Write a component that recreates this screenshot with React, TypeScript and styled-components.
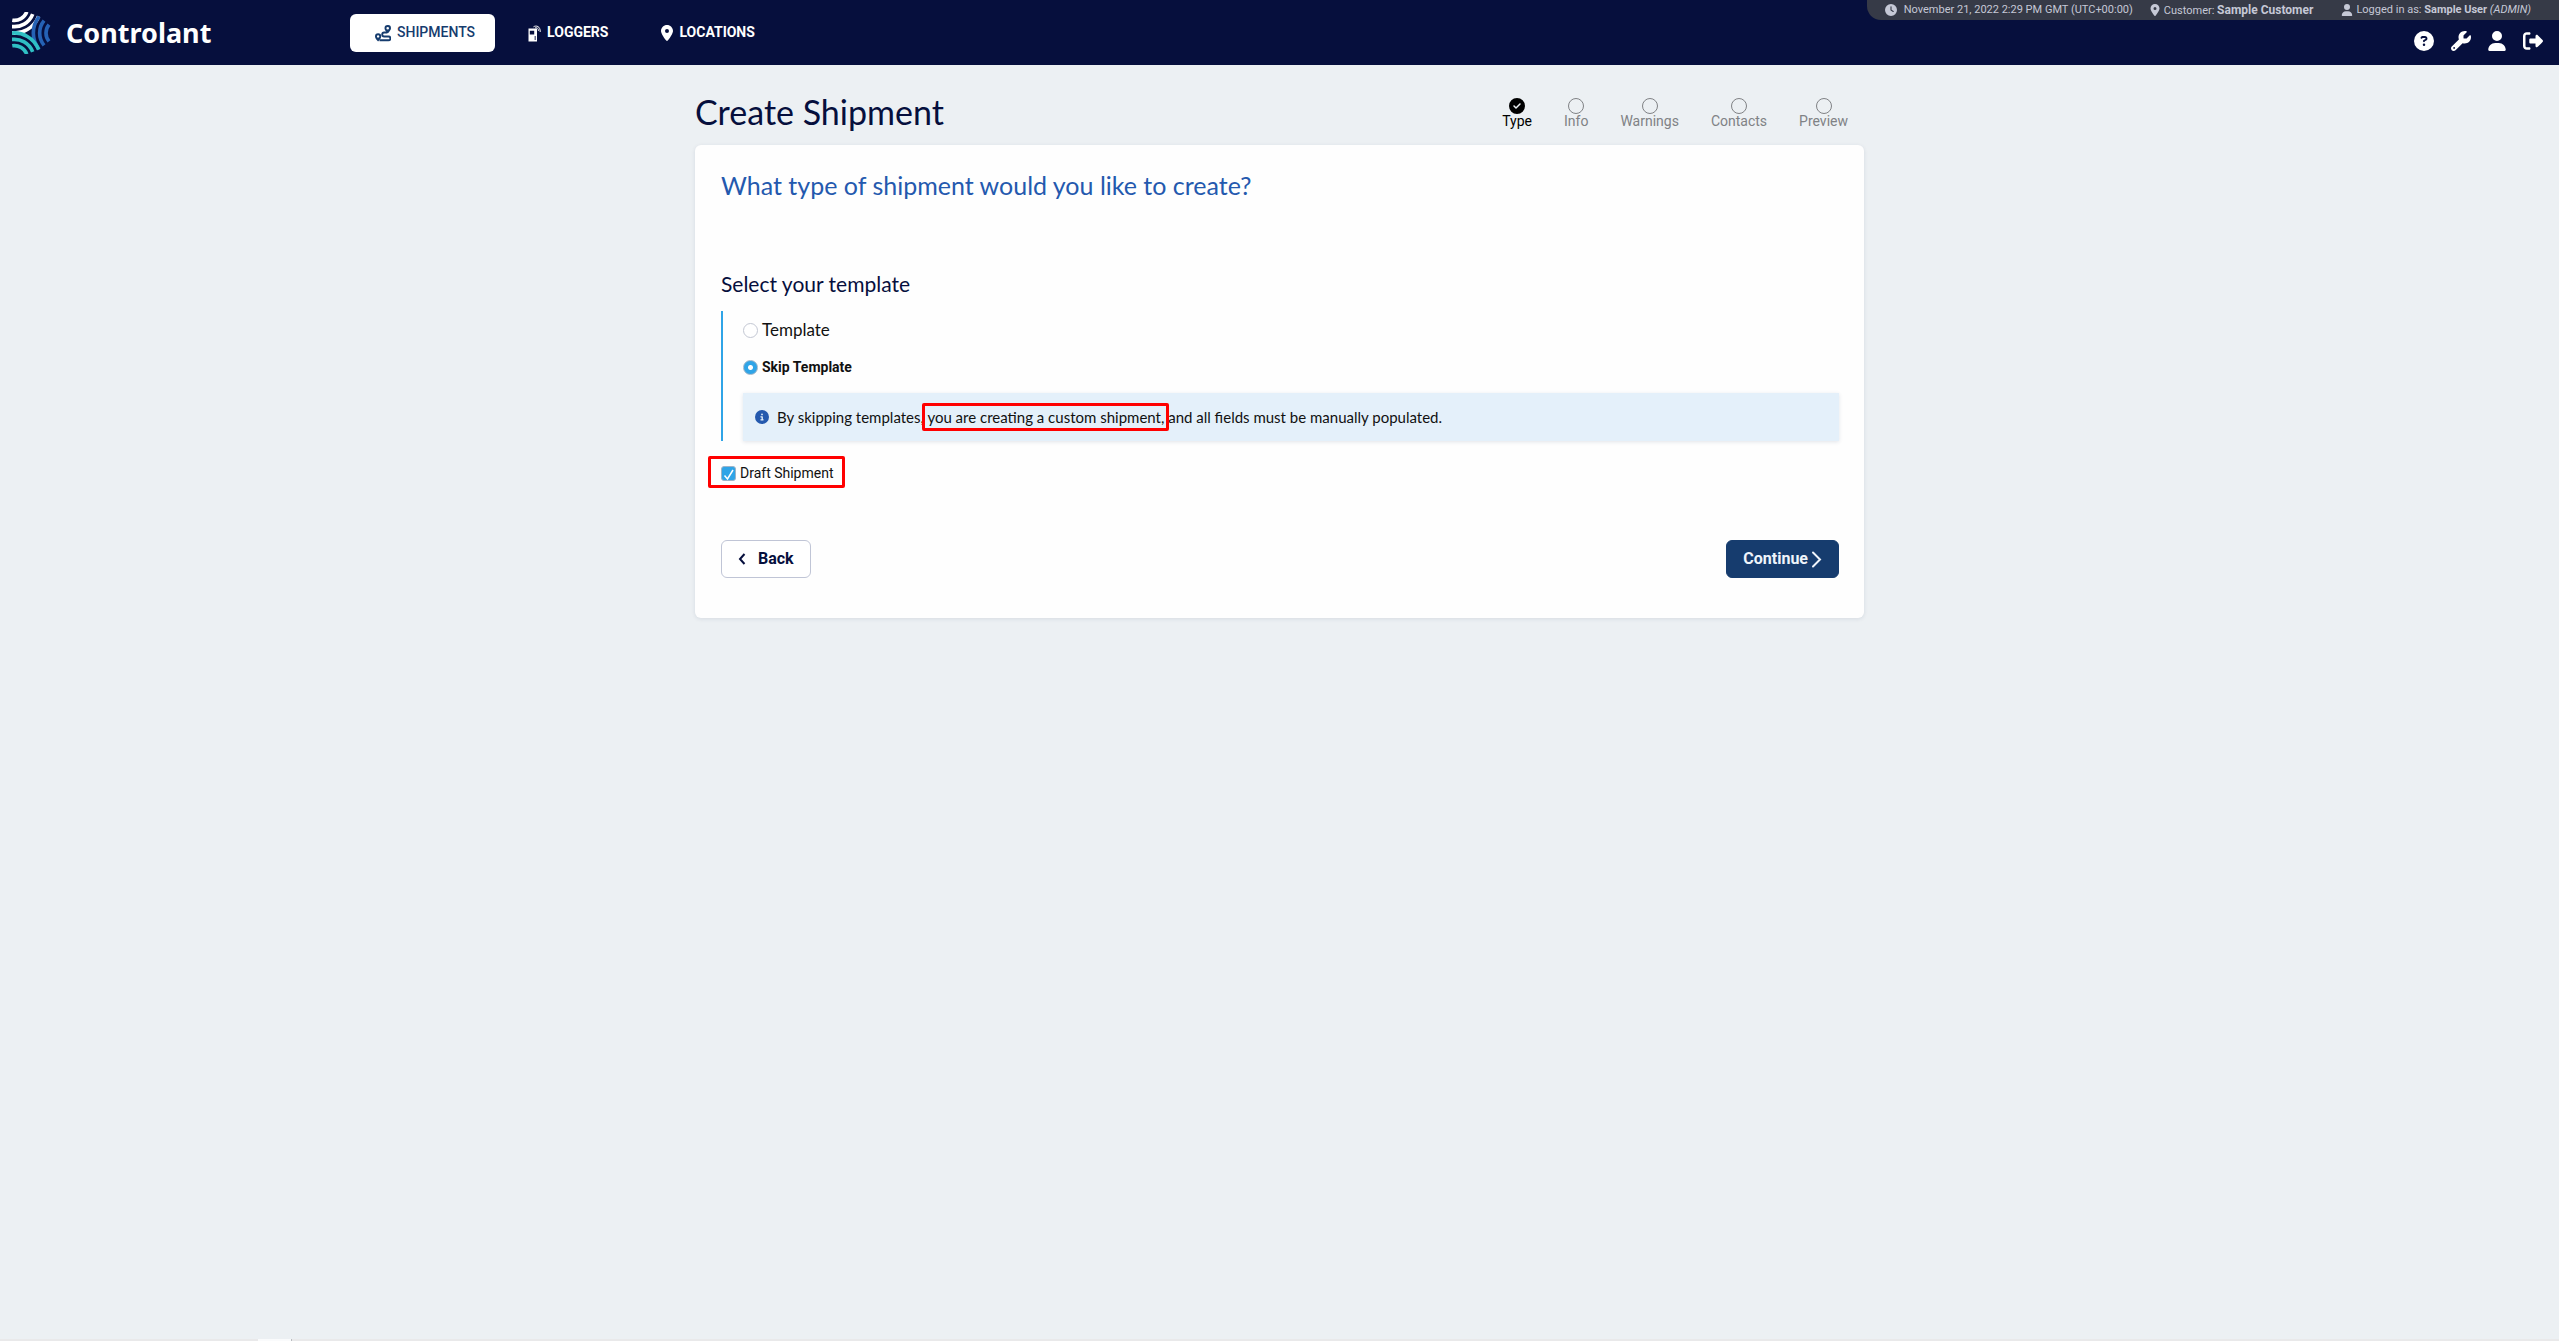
import React, { useState } from "react";
import styled, { createGlobalStyle, css } from "styled-components";
import {
  FaClock,
  FaLocationDot,
  FaUser,
  FaCircleQuestion,
  FaWrench,
  FaCircleInfo,
  FaRightFromBracket,
  FaCircleCheck,
} from "react-icons/fa6";

const humanist = `Lato, "Open Sans", sans-serif`;
const roboto = `Roboto, "Liberation Sans", sans-serif`;

const GlobalStyle = createGlobalStyle`
  *, *::before, *::after { box-sizing: border-box; }
  body {
    margin: 0;
    background: #ecf0f3;
    font-family: ${roboto};
    font-size: 14px;
    color: #111;
  }
`;

const Page = styled.div`
  min-height: 100vh;
  display: flex;
  flex-direction: column;
`;

const Header = styled.header`
  display: flex;
  height: 65px;
  background: #060f3d;
  color: #fff;
`;

const Brand = styled.a`
  display: flex;
  align-items: center;
  gap: 14px;
  width: 350px;
  padding-left: 12px;
  color: #fff;
  text-decoration: none;
  font: 700 27px/36px "Noto Sans", sans-serif;
`;

const Nav = styled.nav`
  display: flex;
  align-items: center;
  gap: 8px;
`;

const NavLink = styled.a<{ $active?: boolean }>`
  display: flex;
  align-items: center;
  gap: 6px;
  height: 38px;
  padding: 0 20px 2px 25px;
  border-radius: 6px;
  font-weight: 700;
  line-height: 36px;
  text-decoration: none;
  color: #fff;
  svg {
    margin-top: 3px;
  }
  ${(p) =>
    p.$active &&
    css`
      background: #fff;
      color: #163c6e;
      font-weight: 500;
    `}
`;

const PinIcon = styled(FaLocationDot)`
  width: 12px;
  height: 16px;
`;

const HeaderEnd = styled.div`
  display: flex;
  flex-direction: column;
  align-items: flex-end;
  margin-left: auto;
`;

const StatusBar = styled.div`
  display: flex;
  align-items: center;
  height: 20px;
  padding: 0 28px 0 18px;
  border-bottom-left-radius: 14px;
  background: #363a47;
  color: #c5c8d6;
  font-size: 11px;
  line-height: 20px;
`;

const StatusItem = styled.span<{ $gap: number; $after?: number }>`
  display: flex;
  align-items: center;
  gap: ${(p) => p.$gap}px;
  margin-right: ${(p) => p.$after ?? 0}px;
  white-space: pre;
`;

const CustomerName = styled.b`
  font-size: 12px;
`;

const Tools = styled.div`
  display: flex;
  align-items: center;
  gap: 17px;
  padding: 11px 16px 0 0;
`;

const ToolButton = styled.button`
  display: flex;
  padding: 0;
  border: 0;
  background: none;
  color: #fff;
  cursor: pointer;
`;

const AccountIcon = styled(FaUser)`
  width: 18px;
  height: 20px;
`;

const Main = styled.main`
  flex: 1;
  width: 100%;
  max-width: 1169px;
  margin: 0 auto;
`;

const TitleRow = styled.div`
  display: flex;
  align-items: center;
  justify-content: space-between;
  height: 80px;
  padding-right: 16px;
`;

const Title = styled.h1`
  margin: 0;
  padding-top: 13px;
  font: 400 34px/40px ${humanist};
  color: #060f3d;
`;

const Steps = styled.ol`
  display: flex;
  gap: 32px;
  margin: 0;
  padding: 16px 0 0;
  list-style: none;
`;

const Step = styled.li<{ $current?: boolean }>`
  display: flex;
  flex-direction: column;
  align-items: center;
  line-height: 15px;
  color: ${(p) => (p.$current ? "#000" : "#808285")};
`;

const Ring = styled.span`
  width: 16px;
  height: 16px;
  border: 1px solid #808285;
  border-radius: 50%;
`;

const Card = styled.form`
  display: flex;
  flex-direction: column;
  padding: 24px 25px 40px 26px;
  border-radius: 6px;
  background: #fefefe;
  box-shadow: 0 1px 4px rgba(20, 40, 80, 0.1);
`;

const Question = styled.h2`
  margin: 0;
  font: 400 25px/32px ${humanist};
  color: #2459ae;
`;

const Group = styled.fieldset`
  margin: 0;
  padding: 0;
  border: 0;
`;

const GroupTitle = styled.legend`
  padding: 70px 0 14px;
  font: 400 21px/26px ${humanist};
  color: #060f3d;
`;

const Options = styled.div`
  display: flex;
  flex-direction: column;
  border-left: 2px solid #2fa4e7;
  padding: 8px 0 0 20px;
`;

const Option = styled.label`
  display: flex;
  align-items: center;
  gap: 4px;
  height: 22px;
  margin-bottom: 15px;
  font: 400 17px/22px ${humanist};
`;

const BoldOption = styled(Option)`
  font: 700 14px/22px ${roboto};
`;

const Radio = styled.input`
  appearance: none;
  width: 15px;
  height: 15px;
  margin: 0;
  border: 1px solid #c3c7d3;
  border-radius: 50%;
  background: #fff;
  &:checked {
    background: radial-gradient(circle, #fff 2px, #2fa4e7 3px);
    border-color: #9db4c8;
  }
`;

const Notice = styled.p`
  display: flex;
  align-items: center;
  gap: 8px;
  height: 48px;
  margin: 0;
  padding: 0 12px;
  background: #e4f0fa;
  box-shadow: 0 1px 4px rgba(20, 40, 80, 0.12);
  font: 400 15px/20px ${humanist};
`;

const marker = css`
  position: relative;
  &::after {
    content: "";
    position: absolute;
    border: 3px solid #f00;
    border-radius: 2px;
    pointer-events: none;
  }
`;

const MarkedText = styled.span`
  ${marker}
  &::after {
    inset: -5px -5px;
  }
`;

const DraftRow = styled.label`
  ${marker}
  display: flex;
  align-items: center;
  align-self: flex-start;
  gap: 4px;
  margin-top: 22px;
  line-height: 20px;
  &::after {
    inset: -7px -11px -5px -13px;
  }
`;

const CheckBox = styled.span`
  display: grid;
  width: 15px;
  height: 15px;
  > * {
    grid-area: 1 / 1;
  }
`;

const Check = styled.input`
  appearance: none;
  width: 15px;
  height: 15px;
  margin: 0;
  border: 1px solid #c3c7d3;
  border-radius: 3px;
  &:checked {
    background: #2fa4e7;
    border-color: #9db4c8;
  }
  &:not(:checked) + svg {
    visibility: hidden;
  }
`;

const CheckMark = styled.svg`
  pointer-events: none;
`;

const Actions = styled.div`
  display: flex;
  justify-content: space-between;
  margin-top: 57px;
`;

const Button = styled.button<{ $primary?: boolean }>`
  display: flex;
  align-items: center;
  height: 38px;
  padding: 0 16px;
  border: 1px solid #c0c5d6;
  border-radius: 6px;
  background: #fff;
  color: #060f3d;
  font: 700 16px/20px ${roboto};
  gap: 12px;
  ${(p) =>
    p.$primary &&
    css`
      gap: 3px;
      border-color: #163c6e;
      background: #163c6e;
      color: #eef4fb;
    `}
`;

const BottomStrip = styled.footer`
  display: flex;
  height: 2px;
  padding-left: 258px;
  background: #e9e9ea;
`;

const StripTab = styled.span`
  width: 34px;
  border-right: 1px solid #b9bcc0;
  background: #fafbfc;
`;

const Arcs = ({ color, turn }: { color: string; turn: number }) => (
  <g stroke={color} transform={`rotate(${turn} 88 99)`}>
    {[40, 59, 78].map((r) => {
      const a = (39 * Math.PI) / 180;
      const x = 178 - r * Math.cos(a);
      const dy = r * Math.sin(a);
      return <path key={r} d={`M${x} ${99 - dy}A${r} ${r} 0 0 0 ${x} ${99 + dy}`} />;
    })}
  </g>
);

const Logo = () => (
  <svg width="40" height="42" viewBox="36 36 120 126" fill="none" strokeWidth="11" aria-hidden>
    <Arcs color="#ffffff" turn={240} />
    <Arcs color="#2562b5" turn={0} />
    <Arcs color="#2fbfc4" turn={120} />
  </svg>
);

const ShipmentIcon = () => (
  <svg width="16" height="17" viewBox="0 0 16 17" fill="none" stroke="currentColor" aria-hidden>
    <path d="M12 7.500H9.200a2 2 0 0 0 0 4h4.300a1.900 1.900 0 0 1 0 3.800H4.500" strokeWidth="1.900" />
    <path
      fill="currentColor"
      stroke="none"
      fillRule="evenodd"
      d="M12.7 0A3.2 3.2 0 0 0 9.500 3.200C9.500 5 11 6.600 12.700 8.500C14.400 6.600 16 5 16 3.200A3.200 3.200 0 0 0 12.700 0ZM12.700 2A1.300 1.300 0 1 1 12.700 4.600A1.300 1.300 0 1 1 12.700 2ZM3.100 8.300A3.100 3.100 0 0 0 0 11.400C0 13 1.500 14.500 3.100 16.500C4.700 14.500 6.200 13 6.200 11.400A3.100 3.100 0 0 0 3.100 8.300ZM3.100 10.200A1.200 1.200 0 1 1 3.100 12.600A1.200 1.200 0 1 1 3.100 10.200Z"
    />
  </svg>
);

const LoggerIcon = () => (
  <svg width="13" height="17" viewBox="0 0 13 17" aria-hidden>
    <path fill="currentColor" fillRule="evenodd" d="M.5 3.500H9V16.500H.5ZM1.800 5.800V9.600H6.200V5.800ZM6.700 11V15H7.600V11Z" />
    <path fill="none" stroke="currentColor" d="M5.500 1.800C8 .2 12.500 1 12.200 7M7 3C9.500 2 10.600 4 10.400 6" />
  </svg>
);

const Chevron = ({ left }: { left?: boolean }) =>
  left ? (
    <svg width="8" height="12" viewBox="0 0 8 12" fill="none" stroke="currentColor" strokeWidth="2" aria-hidden>
      <path d="M6.500 1L2 6l4.500 5" />
    </svg>
  ) : (
    <svg width="11" height="17" viewBox="0 0 11 17" fill="none" stroke="currentColor" strokeWidth="2" strokeLinecap="round" aria-hidden>
      <path d="M2 1.500L9 8.500l-7 7" />
    </svg>
  );

export default function App() {
  const [mode, setMode] = useState("skip");
  const [draft, setDraft] = useState(true);

  return (
    <Page>
      <GlobalStyle />
      <Header>
        <Brand href="#home">
          <Logo />
          Controlant
        </Brand>
        <Nav>
          <NavLink href="#shipments" $active>
            <ShipmentIcon />
            SHIPMENTS
          </NavLink>
          <NavLink href="#loggers">
            <LoggerIcon />
            LOGGERS
          </NavLink>
          <NavLink href="#locations">
            <PinIcon />
            LOCATIONS
          </NavLink>
        </Nav>
        <HeaderEnd>
          <StatusBar>
            <StatusItem $gap={7} $after={16}>
              <FaClock size={12} />
              November 21, 2022 2:29 PM GMT (UTC+00:00)
            </StatusItem>
            <StatusItem $gap={3} $after={28}>
              <FaLocationDot size={12} />
              <span>
                Customer: <CustomerName>Sample Customer</CustomerName>
              </span>
            </StatusItem>
            <StatusItem $gap={3}>
              <FaUser size={12} />
              <span>
                Logged in as: <b>Sample User</b> <i>(ADMIN)</i>
              </span>
            </StatusItem>
          </StatusBar>
          <Tools>
            <ToolButton aria-label="Help">
              <FaCircleQuestion size={20} />
            </ToolButton>
            <ToolButton aria-label="Settings">
              <FaWrench size={20} />
            </ToolButton>
            <ToolButton aria-label="Account">
              <AccountIcon />
            </ToolButton>
            <ToolButton aria-label="Log out">
              <FaRightFromBracket size={20} />
            </ToolButton>
          </Tools>
        </HeaderEnd>
      </Header>

      <Main>
        <TitleRow>
          <Title>Create Shipment</Title>
          <Steps>
            <Step $current>
              <FaCircleCheck size={16} />
              Type
            </Step>
            {["Info", "Warnings", "Contacts", "Preview"].map((name) => (
              <Step key={name}>
                <Ring />
                {name}
              </Step>
            ))}
          </Steps>
        </TitleRow>

        <Card onSubmit={(e) => e.preventDefault()}>
          <Question>What type of shipment would you like to create?</Question>
          <Group>
            <GroupTitle>Select your template</GroupTitle>
            <Options>
              <Option>
                <Radio type="radio" name="mode" checked={mode === "template"} onChange={() => setMode("template")} />
                Template
              </Option>
              <BoldOption>
                <Radio type="radio" name="mode" checked={mode === "skip"} onChange={() => setMode("skip")} />
                Skip Template
              </BoldOption>
              <Notice>
                <FaCircleInfo size={14} color="#2459ae" />
                <span>
                  By skipping templates, <MarkedText>you are creating a custom shipment,</MarkedText> and all fields
                  must be manually populated.
                </span>
              </Notice>
            </Options>
          </Group>
          <DraftRow>
            <CheckBox>
              <Check type="checkbox" checked={draft} onChange={(e) => setDraft(e.target.checked)} />
              <CheckMark width="15" height="15" viewBox="0 0 15 15" fill="none" stroke="#fff" strokeWidth="1.500">
                <path d="M3.500 9.500L6.500 13L12 4" />
              </CheckMark>
            </CheckBox>
            Draft Shipment
          </DraftRow>
          <Actions>
            <Button type="button">
              <Chevron left />
              Back
            </Button>
            <Button type="submit" $primary>
              Continue
              <Chevron />
            </Button>
          </Actions>
        </Card>
      </Main>
      <BottomStrip>
        <StripTab />
      </BottomStrip>
    </Page>
  );
}
